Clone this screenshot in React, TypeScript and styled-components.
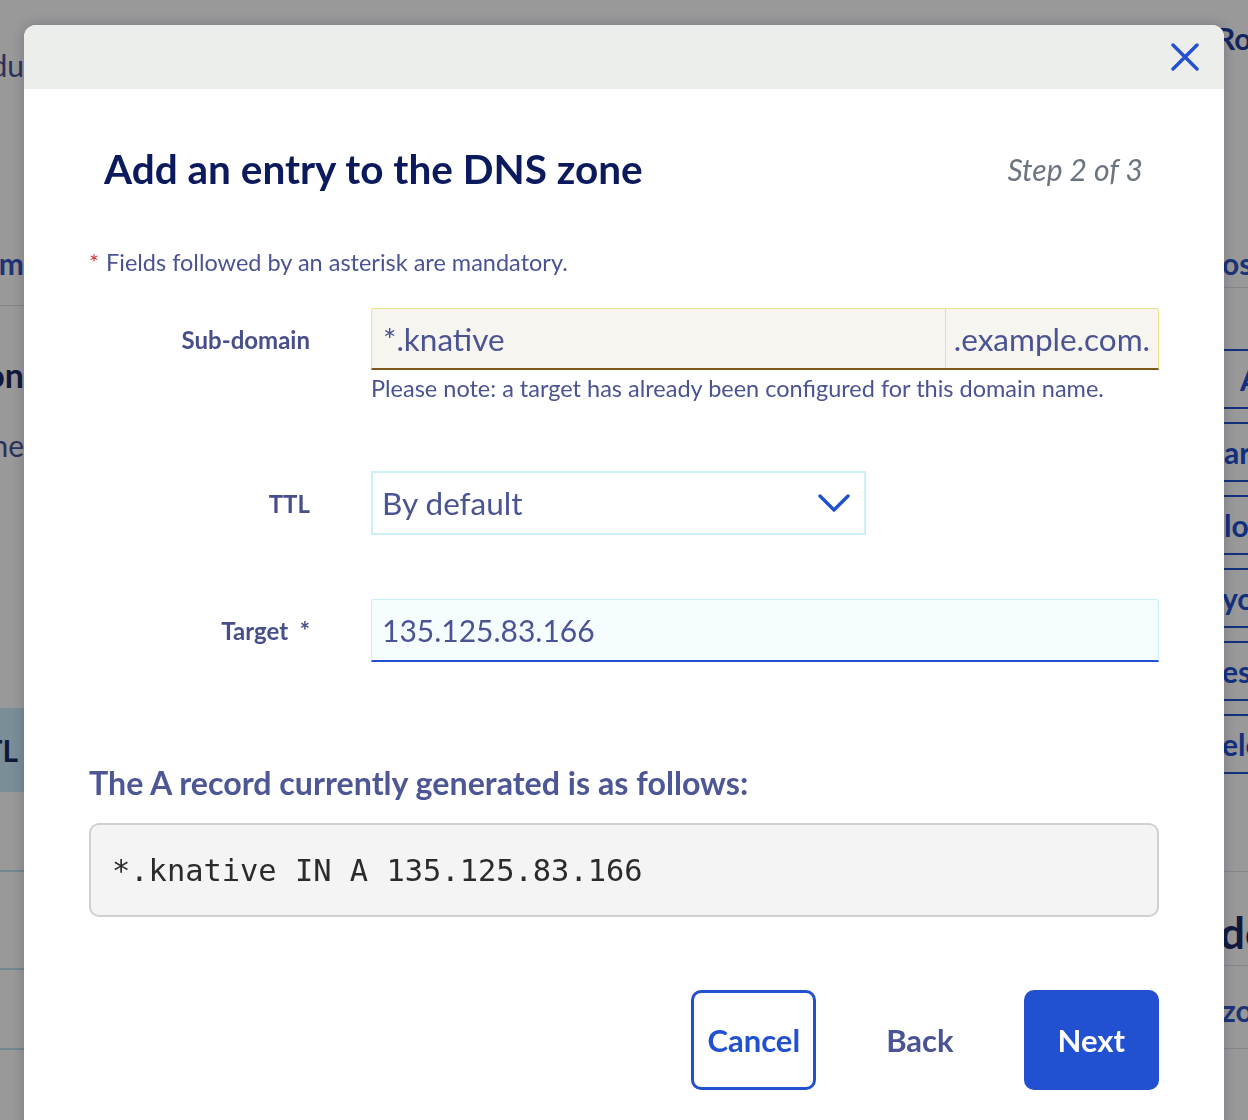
import React from 'react';
import styled, { createGlobalStyle } from 'styled-components';

const colors = {
  navy: '#0b1a5c',
  text: '#4a5394',
  blue: '#2150d0',
  grey: '#6b7580',
};

const GlobalStyle = createGlobalStyle`
  html, body {
    margin: 0;
    padding: 0;
  }
  body {
    font-family: Lato, "Noto Sans", "Liberation Sans", sans-serif;
    background: #fff;
  }
  * {
    box-sizing: border-box;
  }
`;

/* ---------- page behind the modal ---------- */

const Page = styled.div`
  display: flex;
  justify-content: space-between;
  height: 1120px;
  overflow: hidden;
  background: #fff;
`;

const LeftColumn = styled.div`
  width: 24px;
  flex: none;
  overflow: hidden;
  display: flex;
  flex-direction: column;
  align-items: flex-end;
`;

const RightColumn = styled.div`
  width: 80px;
  flex: none;
  overflow: hidden;
  display: flex;
  flex-direction: column;
  align-items: flex-start;
`;

const BgText = styled.div<{ $size?: number; $bold?: boolean; $color?: string; $top: number; $indent?: number }>`
  margin-top: ${(p) => p.$top}px;
  padding-left: ${(p) => p.$indent ?? 0}px;
  font-size: ${(p) => p.$size ?? 30}px;
  line-height: 40px;
  font-weight: ${(p) => (p.$bold ? 700 : 400)};
  color: ${(p) => p.$color ?? colors.text};
  white-space: nowrap;
`;

const BgRule = styled.div<{ $top: number; $color?: string; $weight?: number }>`
  margin-top: ${(p) => p.$top}px;
  height: ${(p) => p.$weight ?? 1}px;
  width: 200px;
  flex: none;
  background: ${(p) => p.$color ?? '#d9e1e8'};
`;

const TealCell = styled.div`
  margin-top: 243px;
  height: 84px;
  width: 120px;
  flex: none;
  background: #cbedfd;
  display: flex;
  align-items: center;
  justify-content: flex-end;
  padding-right: 6px;
  font-size: 30px;
  font-weight: 700;
  color: #1b2a66;
`;

const AccountRow = styled.div`
  margin-top: 18px;
  height: 40px;
  display: flex;
  align-items: center;
  gap: 16px;
  padding-left: 6px;
  font-size: 30px;
  font-weight: 700;
  color: #1f3f9e;
  white-space: nowrap;
`;

const AccountDot = styled.span`
  width: 26px;
  height: 26px;
  border-radius: 50%;
  border: 3px solid #1f3f9e;
  flex: none;
`;

const SideTabs = styled.div`
  margin-top: 61px;
  width: 160px;
  flex: none;
  display: flex;
  flex-direction: column;
  gap: 13px;
`;

const SideTab = styled.div<{ $indent: number }>`
  height: 60px;
  border: 2px solid ${colors.blue};
  display: flex;
  align-items: center;
  padding-left: ${(p) => p.$indent}px;
  font-size: 30px;
  font-weight: 700;
  color: ${colors.blue};
  white-space: nowrap;
`;

/* ---------- overlay & modal ---------- */

const Overlay = styled.div`
  position: fixed;
  inset: 0;
  background: rgba(0, 0, 0, 0.4);
`;

const Modal = styled.div`
  position: fixed;
  top: 25px;
  left: 24px;
  width: 1200px;
  bottom: -40px;
  background: #fff;
  border-radius: 12px 12px 0 0;
  box-shadow: 0 0 14px rgba(20, 20, 60, 0.25);
  overflow: hidden;
  display: flex;
  flex-direction: column;
`;

const ModalHeader = styled.div`
  height: 64px;
  flex: none;
  background: #eceeec;
  display: flex;
  align-items: center;
  justify-content: flex-end;
  padding-right: 24px;
`;

const CloseButton = styled.button`
  width: 30px;
  height: 30px;
  border: none;
  background: none;
  padding: 0;
  display: flex;
  align-items: center;
  justify-content: center;
  cursor: pointer;
`;

const ModalBody = styled.div`
  padding: 56px 65px 0;
`;

const TitleRow = styled.div`
  display: flex;
  align-items: center;
  justify-content: space-between;
  padding: 0 16px 0 15px;
  height: 48px;
`;

const Title = styled.h1`
  margin: 0;
  font-size: 40.5px;
  line-height: 48px;
  font-weight: 700;
  color: ${colors.navy};
`;

const StepText = styled.span`
  font-size: 30px;
  font-style: italic;
  color: ${colors.grey};
`;

const MandatoryNote = styled.p`
  margin: 54px 0 0;
  font-size: 23.5px;
  line-height: 30px;
  color: ${colors.text};
`;

const Req = styled.span`
  color: #c8383c;
  margin-right: 7px;
`;

const Form = styled.div`
  margin-top: 31px;
  display: flex;
  flex-direction: column;
`;

const FieldRow = styled.div<{ $gap: number }>`
  margin-top: ${(p) => p.$gap}px;
  display: grid;
  grid-template-columns: 221px 1fr;
  column-gap: 61px;
  align-items: start;
`;

const Label = styled.div<{ $height: number }>`
  height: ${(p) => p.$height}px;
  display: flex;
  align-items: center;
  justify-content: flex-end;
  font-size: 24px;
  font-weight: 700;
  color: #474f8a;
  white-space: pre;
`;

const FieldCol = styled.div`
  display: flex;
  flex-direction: column;
`;

const inputText = `
  font-size: 31.5px;
  color: ${colors.text};
  white-space: nowrap;
`;

const SplitInput = styled.div`
  height: 62px;
  display: flex;
  background: #f7f5ef;
  border: 1px solid #f5e08a;
  border-bottom: 2px solid #7d5a1c;
  border-radius: 3px 3px 0 0;
`;

const SubValue = styled.div`
  flex: 1;
  display: flex;
  align-items: center;
  padding-left: 11px;
  ${inputText}
`;

const Suffix = styled.div`
  display: flex;
  align-items: center;
  padding: 0 8px;
  border-left: 1px solid #f5e08a;
  ${inputText}
`;

const Hint = styled.div`
  margin-top: 4px;
  font-size: 23.5px;
  line-height: 28px;
  color: ${colors.text};
`;

const Select = styled.div`
  width: 495px;
  height: 64px;
  border: 2px solid #cdeff8;
  background: #fff;
  display: flex;
  align-items: center;
  justify-content: space-between;
  padding: 0 14px 0 9px;
  ${inputText}
`;

const TextInput = styled.div`
  height: 63px;
  background: #f5fdff;
  border: 1px solid #c9eef9;
  border-bottom: 2px solid ${colors.blue};
  border-radius: 3px 3px 0 0;
  display: flex;
  align-items: center;
  padding-left: 10px;
  ${inputText}
  font-size: 30px;
`;

const RecordHeading = styled.h2`
  margin: 102px 0 0;
  font-size: 32.2px;
  line-height: 38px;
  font-weight: 700;
  color: #4e5796;
`;

const CodeBox = styled.pre`
  margin: 21px 0 0;
  height: 94px;
  display: flex;
  align-items: center;
  padding: 0 21px;
  background: #f4f4f4;
  border: 2px solid #d0d0d0;
  border-radius: 10px;
  font-family: "DejaVu Sans Mono", "Liberation Mono", monospace;
  font-size: 30.4px;
  color: #2b2b2b;
`;

const Actions = styled.div`
  margin-top: 73px;
  display: flex;
  justify-content: flex-end;
  gap: 49px;
`;

const Button = styled.button<{ $variant: 'outline' | 'ghost' | 'solid'; $pad: number }>`
  height: 100px;
  padding: 0 ${(p) => p.$pad}px;
  border-radius: 10px;
  font-family: inherit;
  font-size: 31px;
  font-weight: 700;
  cursor: pointer;
  border: 3px solid ${(p) => (p.$variant === 'ghost' ? 'transparent' : colors.blue)};
  background: ${(p) => (p.$variant === 'solid' ? colors.blue : 'transparent')};
  color: ${(p) =>
    p.$variant === 'solid' ? '#fff' : p.$variant === 'outline' ? colors.blue : colors.text};
`;

const CloseIcon = () => (
  <svg width="28" height="28" viewBox="0 0 28 28" fill="none">
    <path d="M2 2 L26 26 M26 2 L2 26" stroke={colors.blue} strokeWidth="3.4" strokeLinecap="round" />
  </svg>
);

const Chevron = () => (
  <svg width="32" height="18" viewBox="0 0 32 18" fill="none">
    <path d="M2 2 L16 16 L30 2" stroke={colors.blue} strokeWidth="3.4" strokeLinecap="round" strokeLinejoin="round" />
  </svg>
);

const App = () => {
  return (
    <>
      <GlobalStyle />
      <Page>
        <LeftColumn>
          <BgText $top={45}>Produits du</BgText>
          <BgText $top={158} $bold $color="#2f56c4">Nom</BgText>
          <BgRule $top={22} />
          <BgText $top={49} $size={34} $bold $color="#1b2a66">Information</BgText>
          <BgText $top={30}>Une</BgText>
          <TealCell>TTL</TealCell>
          <BgRule $top={78} $weight={2} $color="#bfe3f1" />
          <BgRule $top={96} $weight={2} $color="#bfe3f1" />
          <BgRule $top={78} $weight={2} $color="#bfe3f1" />
        </LeftColumn>

        <RightColumn>
          <AccountRow>
            <AccountDot />
            Ro
          </AccountRow>
          <BgText $top={185} $bold $color="#2f56c4" $indent={54}>ost</BgText>
          <BgRule $top={4} />
          <SideTabs>
            <SideTab $indent={70}>A</SideTab>
            <SideTab $indent={54}>ar</SideTab>
            <SideTab $indent={54}>lo</SideTab>
            <SideTab $indent={52}>yo</SideTab>
            <SideTab $indent={52}>es</SideTab>
            <SideTab $indent={52}>ele</SideTab>
          </SideTabs>
          <BgRule $top={97} />
          <BgText $top={40} $size={44} $bold $color="#1b2a66" $indent={52}>de</BgText>
          <BgRule $top={13} />
          <BgText $top={24} $bold $color="#2f56c4" $indent={54}>zo</BgText>
          <BgRule $top={18} />
        </RightColumn>
      </Page>

      <Overlay />

      <Modal>
        <ModalHeader>
          <CloseButton aria-label="Close">
            <CloseIcon />
          </CloseButton>
        </ModalHeader>

        <ModalBody>
          <TitleRow>
            <Title>Add an entry to the DNS zone</Title>
            <StepText>Step 2 of 3</StepText>
          </TitleRow>

          <MandatoryNote>
            <Req>*</Req>Fields followed by an asterisk are mandatory.
          </MandatoryNote>

          <Form>
            <FieldRow $gap={0}>
              <Label $height={62}>Sub-domain</Label>
              <FieldCol>
                <SplitInput>
                  <SubValue>*.knative</SubValue>
                  <Suffix>.example.com.</Suffix>
                </SplitInput>
                <Hint>Please note: a target has already been configured for this domain name.</Hint>
              </FieldCol>
            </FieldRow>

            <FieldRow $gap={69}>
              <Label $height={64}>TTL</Label>
              <Select>
                By default
                <Chevron />
              </Select>
            </FieldRow>

            <FieldRow $gap={64}>
              <Label $height={63}>{'Target  *'}</Label>
              <TextInput>135.125.83.166</TextInput>
            </FieldRow>
          </Form>

          <RecordHeading>The A record currently generated is as follows:</RecordHeading>
          <CodeBox>*.knative IN A 135.125.83.166</CodeBox>

          <Actions>
            <Button $variant="outline" $pad={13}>Cancel</Button>
            <Button $variant="ghost" $pad={18}>Back</Button>
            <Button $variant="solid" $pad={31}>Next</Button>
          </Actions>
        </ModalBody>
      </Modal>
    </>
  );
};

export default App;
